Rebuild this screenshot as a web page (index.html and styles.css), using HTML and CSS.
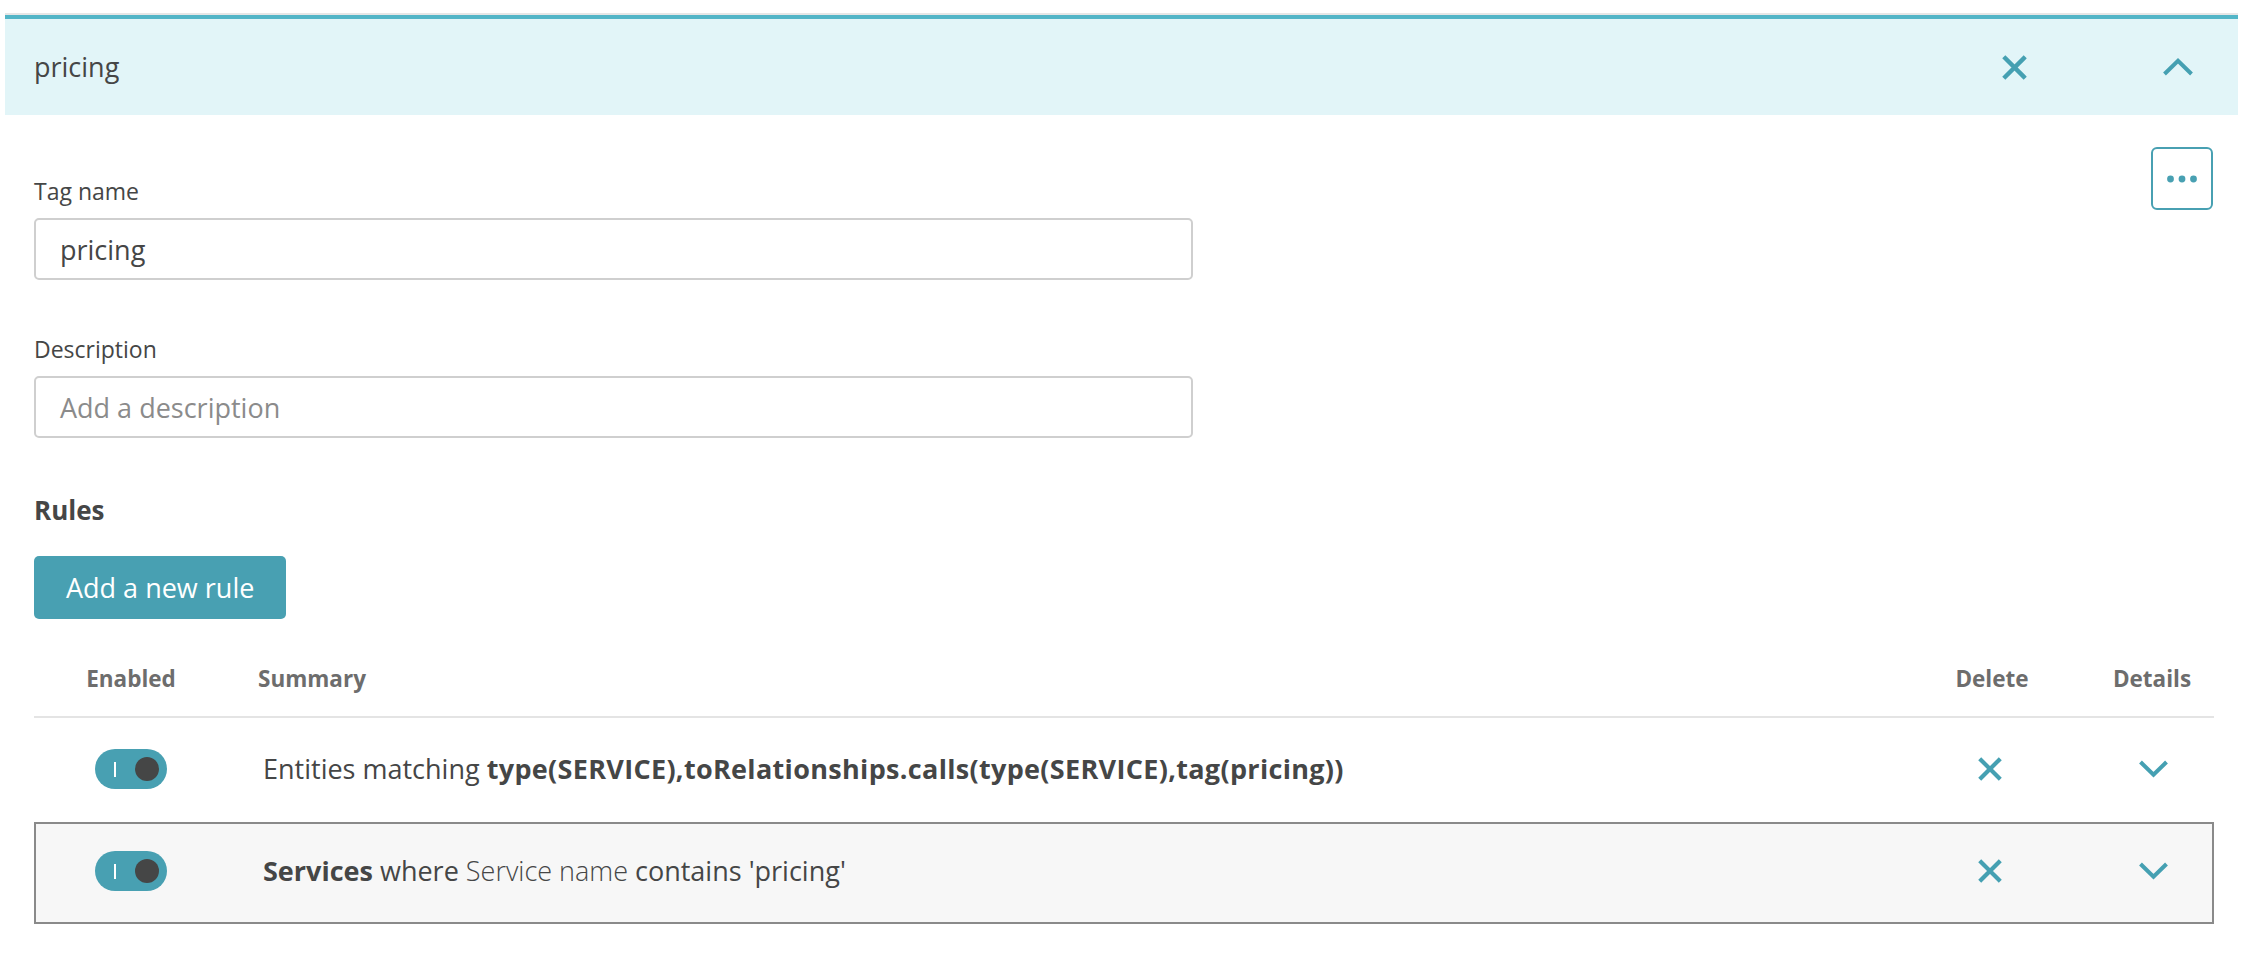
FILE: index.html
```html
<!DOCTYPE html>
<html lang="en">
<head>
<meta charset="utf-8">
<title>pricing</title>
<link rel="stylesheet" href="styles.css">
</head>
<body>
<div class="panel">
  <div class="panel-head">
    <span class="panel-title">pricing</span>
    <div class="head-actions">
      <button class="icon-btn" aria-label="Remove">
        <svg class="ico-x" width="25" height="25" viewBox="0 0 24 24"><path d="M3.2 3.2L20.8 20.8M20.8 3.2L3.2 20.8"/></svg>
      </button>
      <button class="icon-btn" aria-label="Collapse">
        <svg class="ico-chev" width="30" height="18" viewBox="0 0 30 18"><polyline points="1.5,16 15,2.8 28.5,16"/></svg>
      </button>
    </div>
  </div>

  <div class="panel-body">
    <div class="top">
      <div class="fields">
        <label class="field-label">Tag name</label>
        <div class="input">pricing</div>
        <label class="field-label second">Description</label>
        <div class="input placeholder">Add a description</div>
      </div>
      <button class="more" aria-label="More">
        <svg width="30" height="8" viewBox="0 0 30 8"><circle cx="3.5" cy="4" r="3.4"/><circle cx="15" cy="4" r="3.4"/><circle cx="26.5" cy="4" r="3.4"/></svg>
      </button>
    </div>

    <h3 class="rules-title">Rules</h3>
    <button class="add-btn">Add a new rule</button>

    <div class="table">
      <div class="thead">
        <div class="th center">Enabled</div>
        <div class="th summary">Summary</div>
        <div class="th center">Delete</div>
        <div class="th center details">Details</div>
      </div>

      <div class="trow first">
        <div class="cell center"><span class="toggle"><span class="bar"></span><span class="knob"></span></span></div>
        <div class="cell summary">Entities matching <b class="wide">type(SERVICE),toRelationships.calls(type(SERVICE),tag(pricing))</b></div>
        <div class="cell center">
          <svg class="ico-x" width="24" height="24" viewBox="0 0 24 24"><path d="M3.2 3.2L20.8 20.8M20.8 3.2L3.2 20.8"/></svg>
        </div>
        <div class="cell center">
          <svg class="ico-chev" width="29" height="18" viewBox="0 0 29 18"><polyline points="1.5,2 14.5,14.8 27.5,2"/></svg>
        </div>
      </div>

      <div class="trow selected">
        <div class="cell center"><span class="toggle"><span class="bar"></span><span class="knob"></span></span></div>
        <div class="cell summary"><b>Services</b> where <span class="light">Service name</span> contains 'pricing'</div>
        <div class="cell center">
          <svg class="ico-x" width="24" height="24" viewBox="0 0 24 24"><path d="M3.2 3.2L20.8 20.8M20.8 3.2L3.2 20.8"/></svg>
        </div>
        <div class="cell center">
          <svg class="ico-chev" width="29" height="18" viewBox="0 0 29 18"><polyline points="1.5,2 14.5,14.8 27.5,2"/></svg>
        </div>
      </div>
    </div>
  </div>
</div>
</body>
</html>
```

FILE: styles.css
```css
* { box-sizing: border-box; }

html, body {
  margin: 0;
  padding: 0;
  background: #ffffff;
}

body {
  font-family: "Open Sans", "Noto Sans", "Liberation Sans", sans-serif;
  color: #454646;
  width: 2254px;
  height: 964px;
  overflow: hidden;
}

button {
  font-family: inherit;
  border: none;
  background: none;
  padding: 0;
  cursor: pointer;
}

.panel {
  margin: 15px 16px 0 5px;
}

.panel-head {
  height: 100px;
  border-top: 4px solid #52b5c7;
  box-shadow: 0 -2px 0 #e6e6e6;
  background: #e2f5f8;
  display: flex;
  align-items: center;
  justify-content: space-between;
  padding: 0 30px 0 29px;
}

.panel-title {
  font-size: 27px;
  line-height: 34px;
  color: #454646;
}

.head-actions {
  display: flex;
  align-items: center;
  gap: 104px;
}

.icon-btn {
  width: 60px;
  height: 40px;
  display: flex;
  align-items: center;
  justify-content: center;
}

.ico-x path {
  fill: none;
  stroke: #45a0b2;
  stroke-width: 4.2;
  stroke-linecap: square;
}

.ico-chev polyline {
  fill: none;
  stroke: #45a0b2;
  stroke-width: 4;
  stroke-linecap: butt;
  stroke-linejoin: miter;
}

.panel-body {
  padding: 32px 24px 0 29px;
}

.top {
  display: flex;
  justify-content: space-between;
  align-items: flex-start;
}

.fields {
  width: 1159px;
  padding-top: 29px;
  display: flex;
  flex-direction: column;
}

.field-label {
  font-size: 23px;
  line-height: 30px;
  color: #454646;
  margin-bottom: 12px;
}

.field-label.second {
  margin-top: 54px;
}

.input {
  height: 62px;
  border: 2px solid #cfcfcf;
  border-radius: 5px;
  padding: 0 24px;
  font-size: 27px;
  display: flex;
  align-items: center;
  color: #454646;
}

.input.placeholder {
  color: #8b8b8b;
}

.more {
  width: 62px;
  height: 63px;
  border: 2px solid #48a0b2;
  border-radius: 6px;
  display: flex;
  align-items: center;
  justify-content: center;
  margin-right: 1px;
}

.more circle {
  fill: #48a0b2;
}

.rules-title {
  margin: 56px 0 0;
  font-size: 26px;
  line-height: 32px;
  font-weight: 700;
  color: #454646;
}

.add-btn {
  display: block;
  margin-top: 30px;
  height: 63px;
  padding: 0 32px 0 32px;
  background: #48a0b2;
  color: #ffffff;
  border-radius: 5px;
  font-size: 27px;
}

.table {
  margin-top: 21px;
}

.thead {
  display: grid;
  grid-template-columns: 194px 1fr 208px 118px;
  padding: 24px 0 22px;
  border-bottom: 2px solid #e4e4e4;
}

.th {
  font-size: 22.5px;
  line-height: 30px;
  font-weight: 700;
  color: #6d6d6d;
}

.th.summary {
  padding-left: 30px;
}

.th.details {
  padding-right: 6px;
}

.center {
  display: flex;
  justify-content: center;
  align-items: center;
}

.trow {
  display: grid;
  grid-template-columns: 190px 1fr 208px 118px;
  height: 102px;
  border: 2px solid transparent;
  padding-bottom: 4px;
  align-items: center;
}

.trow.first {
  margin-top: 2px;
}

.trow.selected {
  background: #f7f7f7;
  border-color: #8a8a8a;
}

.cell.summary {
  padding-left: 37px;
  font-size: 27px;
  line-height: 36px;
  color: #454646;
  white-space: nowrap;
}

.cell.summary b {
  font-weight: 700;
}

.cell.summary b.wide {
  letter-spacing: 0.32px;
}

.cell.summary .light {
  font-weight: 300;
}

.toggle {
  width: 72px;
  height: 40px;
  border-radius: 20px;
  background: #48a0b2;
  display: flex;
  align-items: center;
  justify-content: space-between;
  padding: 0 8px 0 19px;
}

.toggle .bar {
  width: 2px;
  height: 15px;
  background: #ffffff;
}

.toggle .knob {
  width: 24px;
  height: 24px;
  border-radius: 50%;
  background: #454646;
}
```
